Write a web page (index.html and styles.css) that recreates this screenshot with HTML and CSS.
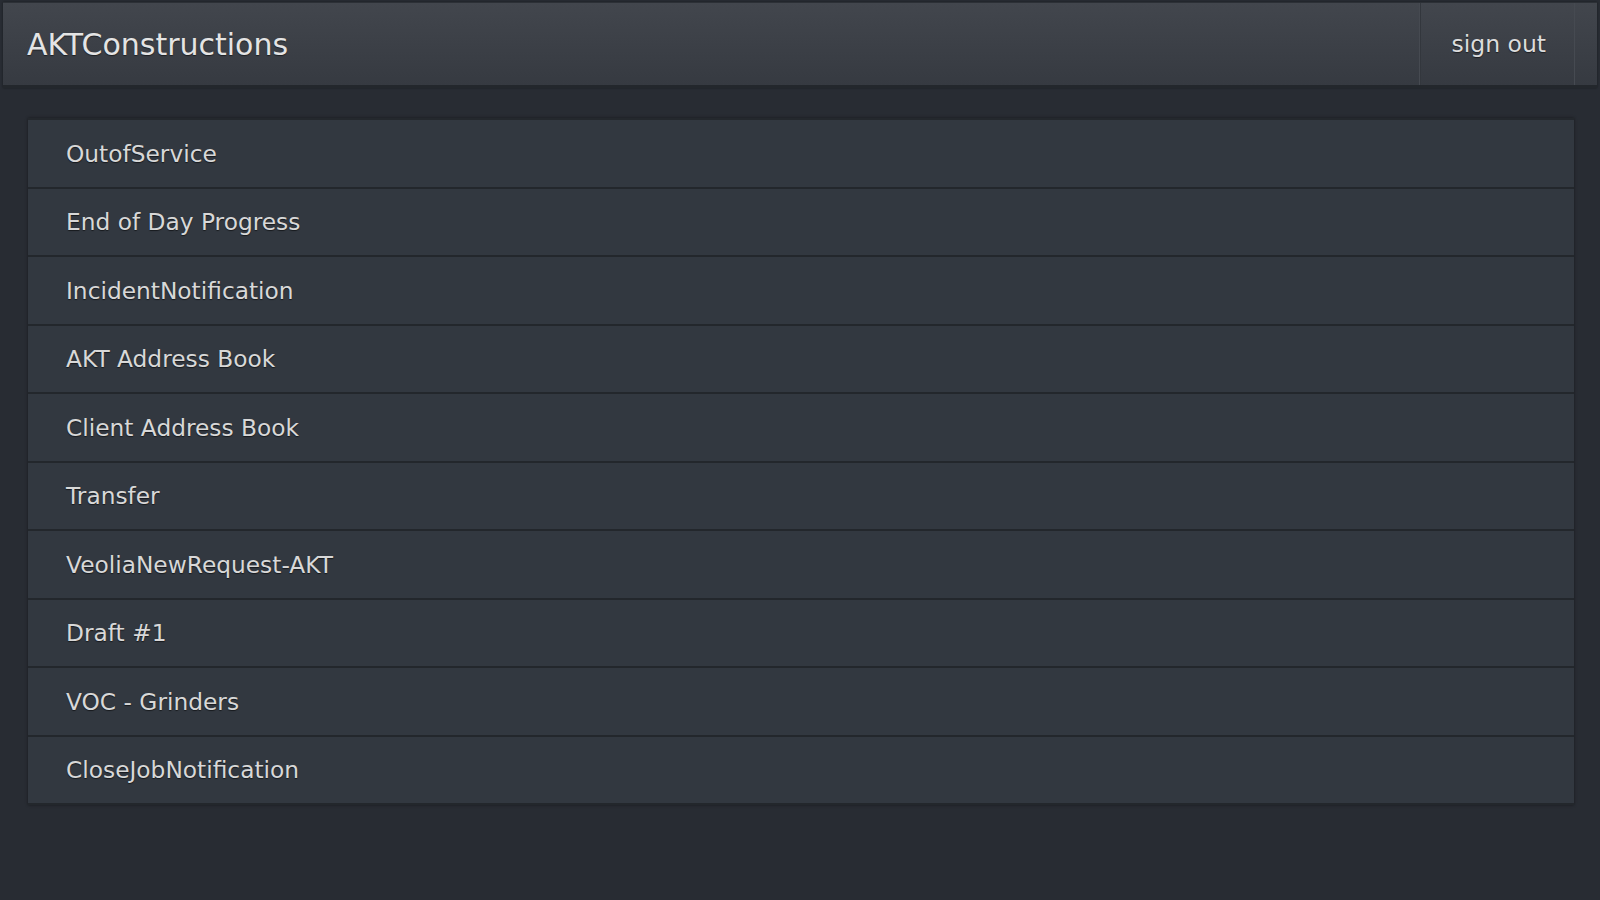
FILE: index.html
```html
<!DOCTYPE html>
<html>
<head>
<meta charset="utf-8">
<link rel="stylesheet" href="styles.css">
</head>
<body>
<header class="topbar">
  <h1 class="title">AKTConstructions</h1>
  <a class="signout">sign out</a>
</header>
<main class="content">
  <ul class="list">
    <li class="item">OutofService</li>
    <li class="item">End of Day Progress</li>
    <li class="item">IncidentNotification</li>
    <li class="item">AKT Address Book</li>
    <li class="item">Client Address Book</li>
    <li class="item">Transfer</li>
    <li class="item">VeoliaNewRequest-AKT</li>
    <li class="item">Draft #1</li>
    <li class="item">VOC - Grinders</li>
    <li class="item">CloseJobNotification</li>
  </ul>
</main>
</body>
</html>
```
FILE: styles.css
```css
html, body {
  margin: 0;
  padding: 0;
  height: 100%;
}
body {
  background: #282c33;
  font-family: "DejaVu Sans", "Liberation Sans", sans-serif;
  color: #dcdcdc;
  padding-top: 2px;
  box-sizing: border-box;
}
.topbar {
  margin: 0 3px;
  height: 82px;
  display: flex;
  align-items: stretch;
  background: linear-gradient(#42464d, #363a41);
  border-top: 1px solid #2c3036;
  border-bottom: 3px solid #23272c;
  box-shadow: 0 0 2px rgba(0,0,0,0.4);
  padding-right: 22px;
}
.title {
  flex: 1;
  margin: 0;
  padding-left: 24px;
  display: flex;
  align-items: center;
  font-size: 30px;
  font-weight: normal;
  color: #e4e4e4;
  text-shadow: 0 1px 1px rgba(0,0,0,0.5);
}
.signout {
  display: flex;
  align-items: center;
  padding: 0 28px 0 31px;
  font-size: 23.5px;
  color: #dcdcdc;
  text-shadow: 0 1px 1px rgba(0,0,0,0.5);
  border-left: 1px solid #464a51;
  border-right: 1px solid #464a51;
  box-shadow: inset 1px 0 0 #33373d;
}
.content {
  padding: 30px 26px 0 28px;
}
.list {
  list-style: none;
  margin: 0;
  padding: 0;
  border-top: 2px solid #24282d;
  box-shadow: 0 0 3px rgba(0,0,0,0.45);
}
.item {
  height: 66.5px;
  border-bottom: 2px solid #23272c;
  background: #323840;
  padding-left: 38px;
  display: flex;
  align-items: center;
  font-size: 23.3px;
  color: #d8d8d8;
  text-shadow: 0 1px 1px rgba(0,0,0,0.55);
}
```
